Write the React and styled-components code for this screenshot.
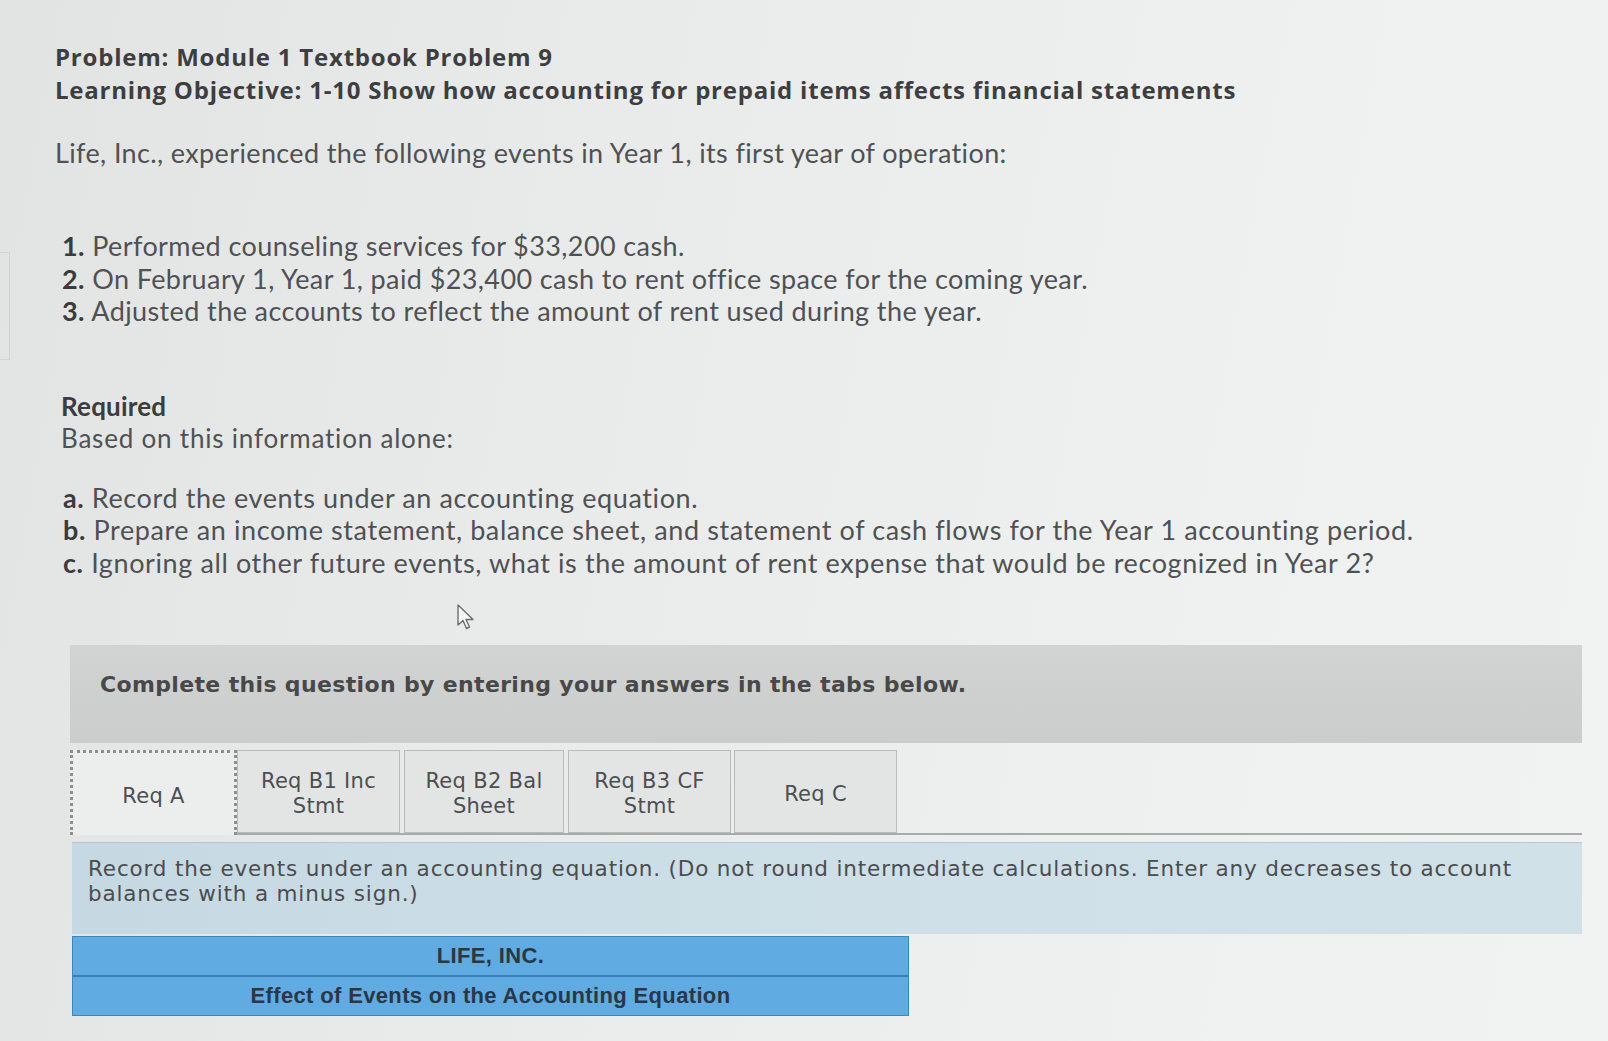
import React from "react";
import styled, { createGlobalStyle } from "styled-components";

const GlobalStyle = createGlobalStyle`
	html, body {
		margin: 0;
		padding: 0;
	}
	body {
		width: 1608px;
		height: 1041px;
		overflow: hidden;
		background: linear-gradient(100deg, #e2e4e4 0%, #e9ebeb 35%, #eff0f0 75%, #f1f2f2 100%);
		font-family: Lato, "Open Sans", sans-serif;
		color: #4f5153;
	}
`;

const Page = styled.div`
	position: relative;
	padding: 40px 0 0 55px;
	box-sizing: border-box;
	height: 1041px;
`;

const EdgeMark = styled.div`
	position: absolute;
	left: 0;
	top: 252px;
	width: 9px;
	height: 106px;
	border: 1px solid #d2d4d4;
	border-left: none;
`;

const Heading = styled.h1`
	margin: 0;
	font-family: "Open Sans", Lato, sans-serif;
	font-size: 24px;
	line-height: 33px;
	font-weight: 700;
	color: #3d3e3f;
	letter-spacing: 0.78px;
`;

const Intro = styled.p`
	margin: 30px 0 0;
	font-size: 27px;
	line-height: 34px;
	letter-spacing: 0.37px;
`;

const List = styled.ol`
	list-style: none;
	margin: 60px 0 0 7px;
	padding: 0;
`;

const Item = styled.li`
	font-size: 27px;
	line-height: 32.5px;
	letter-spacing: 0.4px;

	b {
		color: #3a3b3c;
		font-weight: 700;
	}
`;

const Required = styled.div`
	margin: 62px 0 0 6px;
	font-size: 26px;
	line-height: 32px;

	strong {
		display: block;
		color: #3b3c3d;
		font-weight: 700;
		letter-spacing: 0.2px;
	}
	span {
		letter-spacing: 0.8px;
	}
`;

const SubList = styled(List)`
	margin: 28px 0 0 8px;

	li {
		letter-spacing: 0.6px;
	}
`;

const Pointer = styled.div`
	height: 66px;
	padding-left: 401px;
	padding-top: 25px;
	box-sizing: border-box;
`;

const Panel = styled.div`
	margin-left: 15px;
	width: 1512px;
`;

const Banner = styled.div`
	height: 98px;
	background: linear-gradient(180deg, #d2d3d3, #cbcccc);
	display: flex;
	align-items: center;
	padding: 0 0 20px 30px;
	box-sizing: border-box;
	font-family: "DejaVu Sans", Verdana, sans-serif;
	font-weight: 700;
	font-size: 22px;
	color: #484848;
	letter-spacing: 0.35px;
`;

const Tabs = styled.div`
	display: flex;
	margin-top: 7px;
	height: 83px;
	border-bottom: 2px solid #a9abab;
`;

const Tab = styled.div`
	width: ${(p) => p.$w}px;
	margin-left: ${(p) => p.$gap}px;
	display: flex;
	align-items: center;
	justify-content: center;
	padding-top: 5px;
	text-align: center;
	font-family: "DejaVu Sans", Verdana, sans-serif;
	font-size: 21px;
	line-height: 25px;
	letter-spacing: 0.3px;
	color: #4d4e4f;
	box-sizing: border-box;
	background: ${(p) => (p.$active ? "#eceeee" : "#e3e5e5")};
	border: ${(p) => (p.$active ? "3px dotted #8d8f8f" : "1px solid #b9bbbb")};
	border-bottom: ${(p) => (p.$active ? "none" : "1px solid #b9bbbb")};
	margin-bottom: ${(p) => (p.$active ? "-2px" : "0")};
`;

const Instruction = styled.div`
	margin: 7px 0 0 2px;
	height: 92px;
	background: linear-gradient(90deg, #c6d9e2, #cfe0e8 60%, #d1e1e8);
	border-top: 1px solid #b4c7d0;
	padding: 13px 30px 0 16px;
	box-sizing: border-box;
	font-family: "DejaVu Sans", Verdana, sans-serif;
	font-size: 21.5px;
	line-height: 25px;
	color: #4a4c4e;
	letter-spacing: 0.84px;
`;

const Statement = styled.div`
	margin: 2px 0 0 2px;
	width: 835px;
	background: #5fabe2;
	border: 1px solid #3d86bd;
	font-family: "Liberation Sans", Arial, sans-serif;
	font-weight: 700;
	color: #2b3743;
`;

const StatementRow = styled.div`
	height: ${(p) => p.$h}px;
	display: flex;
	align-items: center;
	justify-content: center;
	font-size: 22px;
	letter-spacing: 0.35px;
	& + & {
		border-top: 2px solid #3a7fb3;
	}
`;

const Cursor = () => (
	<svg width="20" height="26" viewBox="0 0 20 26">
		<path
			d="M2 1 L2 21 L7 16.5 L10.5 24.5 L13.5 23 L10 15.5 L17 15.5 Z"
			fill="#f7f7f7"
			stroke="#6a6c6e"
			strokeWidth="1.4"
			strokeLinejoin="round"
		/>
	</svg>
);

const tabs = [
	{ label: ["Req A"], w: 167, gap: 0, active: true },
	{ label: ["Req B1 Inc", "Stmt"], w: 163, gap: 0 },
	{ label: ["Req B2 Bal", "Sheet"], w: 160, gap: 4 },
	{ label: ["Req B3 CF", "Stmt"], w: 163, gap: 4 },
	{ label: ["Req C"], w: 163, gap: 3 },
];

export default function App() {
	return (
		<>
			<GlobalStyle />
			<Page>
				<EdgeMark />
				<Heading>
					Problem: Module 1 Textbook Problem 9
					<br />
					Learning Objective: 1-10 Show how accounting for prepaid items affects financial statements
				</Heading>
				<Intro>Life, Inc., experienced the following events in Year 1, its first year of operation:</Intro>
				<List>
					<Item><b>1.</b> Performed counseling services for $33,200 cash.</Item>
					<Item><b>2.</b> On February 1, Year 1, paid $23,400 cash to rent office space for the coming year.</Item>
					<Item><b>3.</b> Adjusted the accounts to reflect the amount of rent used during the year.</Item>
				</List>
				<Required>
					<strong>Required</strong>
					<span>Based on this information alone:</span>
				</Required>
				<SubList>
					<Item><b>a.</b> Record the events under an accounting equation.</Item>
					<Item><b>b.</b> Prepare an income statement, balance sheet, and statement of cash flows for the Year 1 accounting period.</Item>
					<Item><b>c.</b> Ignoring all other future events, what is the amount of rent expense that would be recognized in Year 2?</Item>
				</SubList>
				<Pointer>
					<Cursor />
				</Pointer>
				<Panel>
					<Banner>Complete this question by entering your answers in the tabs below.</Banner>
					<Tabs>
						{tabs.map((t, i) => (
							<Tab key={i} $w={t.w} $gap={t.gap} $active={t.active}>
								<div>
									{t.label.map((l, j) => (
										<div key={j}>{l}</div>
									))}
								</div>
							</Tab>
						))}
					</Tabs>
					<Instruction>
						Record the events under an accounting equation. (Do not round intermediate calculations. Enter any decreases to account balances with a minus sign.)
					</Instruction>
					<Statement>
						<StatementRow $h={38}>LIFE, INC.</StatementRow>
						<StatementRow $h={38}>Effect of Events on the Accounting Equation</StatementRow>
					</Statement>
				</Panel>
			</Page>
		</>
	);
}
